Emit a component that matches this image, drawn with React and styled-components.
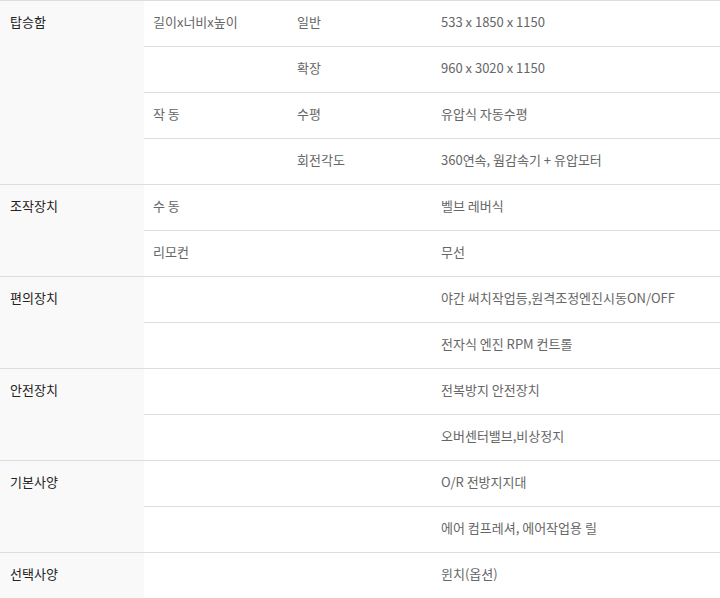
import React from "react";
import styled, { createGlobalStyle } from "styled-components";

const GlobalStyle = createGlobalStyle`
  body {
    margin: 0;
    background: #fff;
    font-family: "Noto Sans CJK KR", "Noto Sans", sans-serif;
  }
`;

const SpecTable = styled.table`
  width: 720px;
  border-collapse: collapse;
  table-layout: fixed;
  border-top: 1px solid #dddddd;
  font-size: 13px;
  line-height: 20px;
`;

const Col = styled.col`
  width: ${(p) => p.$w}px;
`;

const Th = styled.th`
  background: #f9f9f9;
  color: #222;
  font-weight: normal;
  text-align: left;
  vertical-align: top;
  padding: 11px 10px;
  border-bottom: 1px solid #dddddd;
`;

const Td = styled.td`
  height: 23px;
  color: #666;
  vertical-align: top;
  padding: 11px 9px;
  border-bottom: 1px solid #dddddd;
  white-space: nowrap;
`;

const specs = [
  {
    group: "탑승함",
    rows: [
      ["길이x너비x높이", "일반", "533 x 1850 x 1150"],
      ["", "확장", "960 x 3020 x 1150"],
      ["작 동", "수평", "유압식 자동수평"],
      ["", "회전각도", "360연속, 웜감속기 + 유압모터"],
    ],
  },
  {
    group: "조작장치",
    rows: [
      ["수 동", "", "벨브 레버식"],
      ["리모컨", "", "무선"],
    ],
  },
  {
    group: "편의장치",
    rows: [
      ["", "", "야간 써치작업등,원격조정엔진시동ON/OFF"],
      ["", "", "전자식 엔진 RPM 컨트롤"],
    ],
  },
  {
    group: "안전장치",
    rows: [
      ["", "", "전복방지 안전장치"],
      ["", "", "오버센터밸브,비상정지"],
    ],
  },
  {
    group: "기본사양",
    rows: [
      ["", "", "O/R 전방지지대"],
      ["", "", "에어 컴프레셔, 에어작업용 릴"],
    ],
  },
  {
    group: "선택사양",
    rows: [["", "", "윈치(옵션)"]],
  },
];

export default function App() {
  return (
    <>
      <GlobalStyle />
      <SpecTable>
        <colgroup>
          <Col $w={144} />
          <Col $w={144} />
          <Col $w={144} />
          <Col $w={288} />
        </colgroup>
        <tbody>
          {specs.map((spec) =>
            spec.rows.map((row, i) => (
              <tr key={spec.group + i}>
                {i === 0 && <Th rowSpan={spec.rows.length}>{spec.group}</Th>}
                {row.map((cell, j) => (
                  <Td key={j}>{cell}</Td>
                ))}
              </tr>
            ))
          )}
        </tbody>
      </SpecTable>
    </>
  );
}
